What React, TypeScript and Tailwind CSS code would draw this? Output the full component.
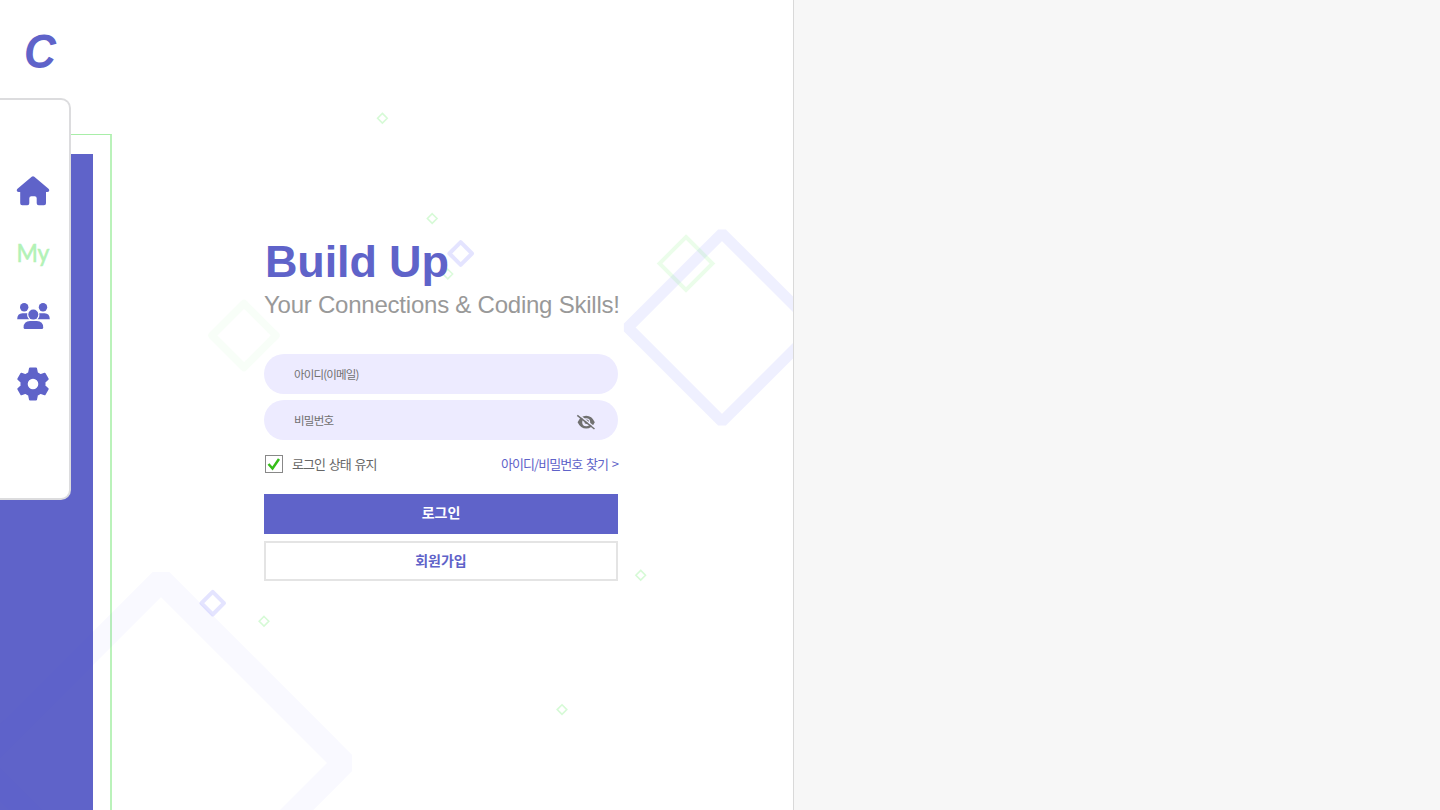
type Diamond = { cx: number; cy: number; r: number; w: number; color: string; join: "miter" | "round" | "bevel" };

const diamonds: Diamond[] = [
  { cx: 161, cy: 763, r: 182.7, w: 23.6, color: "rgba(95,75,255,0.035)", join: "bevel" },
  { cx: 722, cy: 327.5, r: 94.2, w: 11, color: "rgba(90,95,255,0.095)", join: "bevel" },
  { cx: 686, cy: 263.5, r: 26.5, w: 4, color: "rgba(90,240,80,0.12)", join: "miter" },
  { cx: 244, cy: 335.5, r: 32, w: 7.5, color: "rgba(90,240,90,0.045)", join: "round" },
  { cx: 460.7, cy: 253.5, r: 11.3, w: 4, color: "rgba(90,90,255,0.16)", join: "round" },
  { cx: 212.7, cy: 603.2, r: 11.3, w: 4, color: "rgba(90,90,255,0.16)", join: "round" },
  { cx: 382.4, cy: 118.2, r: 4.8, w: 1.6, color: "rgba(90,235,90,0.25)", join: "miter" },
  { cx: 432.2, cy: 218.5, r: 4.8, w: 1.6, color: "rgba(90,235,90,0.25)", join: "miter" },
  { cx: 447.8, cy: 274, r: 4.8, w: 1.6, color: "rgba(90,235,90,0.22)", join: "miter" },
  { cx: 640.7, cy: 575.2, r: 4.8, w: 1.6, color: "rgba(90,235,90,0.25)", join: "miter" },
  { cx: 264, cy: 621.3, r: 4.8, w: 1.6, color: "rgba(90,235,90,0.25)", join: "miter" },
  { cx: 562, cy: 709.6, r: 4.8, w: 1.6, color: "rgba(90,235,90,0.25)", join: "miter" },
];

function Backdrop() {
  return (
    <svg className="pointer-events-none absolute inset-0" width="793" height="810" viewBox="0 0 793 810" fill="none">
      {diamonds.map((d, i) => (
        <path
          key={i}
          d={`M${d.cx} ${d.cy - d.r}L${d.cx + d.r} ${d.cy}L${d.cx} ${d.cy + d.r}L${d.cx - d.r} ${d.cy}Z`}
          stroke={d.color}
          strokeWidth={d.w}
          strokeLinejoin={d.join}
        />
      ))}
    </svg>
  );
}

function HomeIcon() {
  return (
    <svg width="34" height="30" viewBox="0 0 34 30" fill="currentColor">
      <path d="M15.7 .8Q17-.2 18.3.8L32.5 12.8Q33.6 14 33 15.2Q32.5 16 31.3 16H30V27.2Q30 29.2 28 29.2H22.7Q20.7 29.2 20.7 27.2V22.2Q20.7 20.2 18.7 20.2H15.3Q13.3 20.2 13.3 22.2V27.2Q13.3 29.2 11.3 29.2H6.2Q4.2 29.2 4.2 27.2V16H2.7Q1.5 16 1 15.2Q.4 14 1.5 12.8Z" />
    </svg>
  );
}

function PeopleIcon() {
  return (
    <svg width="33" height="26" viewBox="0 0 33 26" fill="currentColor">
      <circle cx="7.2" cy="4.3" r="4.2" />
      <circle cx="26" cy="4.3" r="4.2" />
      <path d="M.2 16.2Q.2 10.2 5.5 10.2H10.3Q9.5 13.8 12.3 16.2Z" />
      <path d="M32.8 16.2Q32.8 10.2 27.5 10.2H22.2Q23.1 13.8 20.5 16.2Z" />
      <circle cx="16.3" cy="11.6" r="5" />
      <path d="M6.6 24.5Q6.6 18 13 18H19.8Q26.2 18 26.2 24.5Q26.2 26 24.8 26H8Q6.6 26 6.6 24.5Z" />
    </svg>
  );
}

function GearIcon() {
  return (
    <svg width="32" height="34" viewBox="0 0 32 34" fill="none">
      <path
        fill="currentColor"
        stroke="currentColor"
        strokeWidth="2"
        strokeLinejoin="round"
        fillRule="evenodd"
        d="M13 1.500H19L20 6.200L23.500 8.200L27.700 6.700L30.700 12L27.500 15V19L30.700 22L27.700 27.300L23.500 25.800L20 27.800L19 32.500H13L12 27.800L8.500 25.800L4.300 27.300L1.300 22L4.500 19V15L1.300 12L4.300 6.700L8.500 8.200L12 6.200ZM16 10.700A6.300 6.300 0 1 0 16 23.300A6.300 6.300 0 1 0 16 10.700Z"
      />
    </svg>
  );
}

function EyeOffIcon() {
  return (
    <svg className="mt-[3px]" width="20" height="18" viewBox="0 0 20 18" fill="none">
      <path
        fill="#707070"
        fillRule="evenodd"
        d="M1.600 9.200Q4.600 2.800 10.200 2.800T18.800 9.200Q15.800 15.600 10.200 15.600T1.600 9.200ZM10.200 5.200A4 4 0 1 0 10.200 13.200A4 4 0 1 0 10.200 5.200Z"
      />
      <circle cx="10.700" cy="8.800" r="2.300" fill="#707070" />
      <path d="M2.700 1.600L19.600 15" stroke="#edebff" strokeWidth="1.400" />
      <path d="M1.300 2.300L18.500 16" stroke="#707070" strokeWidth="1.500" />
    </svg>
  );
}

function Sidebar() {
  return (
    <aside className="flex w-[71px] shrink-0 flex-col">
      <div className="h-[98px] pt-[22px] pl-[24px] font-['Liberation_Sans',sans-serif] text-[48px] leading-[60px] font-bold text-[#5f63c9] italic">
        <span className="inline-block origin-left scale-x-92">C</span>
      </div>
      <nav className="flex h-[402px] flex-col items-center rounded-r-[10px] border-2 border-l-0 border-[#dcdcde] bg-white pt-[76px] pr-[3px] text-[#5f63c9]">
        <a className="flex h-[30px] items-center"><HomeIcon /></a>
        <a className="mt-[28px] h-[36px] scale-x-92 font-['Lato',sans-serif] text-[25px] leading-[36px] text-[#b2f2b6] [-webkit-text-stroke:0.6px_#b2f2b6]">My</a>
        <a className="mt-[33px]"><PeopleIcon /></a>
        <a className="mt-[38px]"><GearIcon /></a>
      </nav>
    </aside>
  );
}

function LoginForm() {
  return (
    <form className="flex w-[354px] flex-col font-['Noto_Sans_CJK_KR',sans-serif]" onSubmit={(e) => e.preventDefault()}>
      <h1 className="h-[54px] pl-px font-['Liberation_Sans',sans-serif] text-[45px] leading-[55px] font-bold tracking-[-0.15px] whitespace-nowrap text-[#5f63c9]">Build Up</h1>
      <p className="mt-px h-[32px] font-['Liberation_Sans',sans-serif] text-[24px] leading-[32px] tracking-[-0.23px] whitespace-nowrap text-[#999]">Your Connections &amp; Coding Skills!</p>
      <div className="mt-[33px] flex h-[40px] items-center rounded-full bg-[#edebff] pt-[2px] pl-[30px] text-[11.5px] tracking-[-0.85px] text-[#707070]">아이디(이메일)</div>
      <div className="mt-[6px] flex h-[40px] items-center justify-between rounded-full bg-[#edebff] pr-[22px] pl-[30px] text-[11.5px] tracking-[-0.75px] text-[#707070]">
        <span className="pt-[2px]">비밀번호</span>
        <EyeOffIcon />
      </div>
      <div className="mt-[14px] flex h-[20px] items-center justify-between text-[13px] tracking-[-0.95px] whitespace-nowrap [word-spacing:1.8px]">
        <label className="flex items-center gap-[9px] pl-[1px] text-[#666]">
          <span className="flex size-[18px] items-center justify-center border border-[#888] bg-white">
            <svg width="14" height="14" viewBox="0 0 14 14" fill="none" stroke="#35bd18" strokeWidth="2.5"><path d="M1.5 7L5.5 11.5L12 2" /></svg>
          </span>
          <span>로그인 상태 유지</span>
        </label>
        <a className="text-[#5f63c9]">아이디/비밀번호 찾기 &gt;</a>
      </div>
      <button className="mt-[20px] h-[40px] bg-[#5f63c9] pb-[3px] text-[14px] font-bold text-white">로그인</button>
      <button className="mt-[7px] h-[40px] border-2 border-[#e4e4e4] bg-white pb-[2px] text-[14px] font-bold text-[#5f63c9]">회원가입</button>
    </form>
  );
}

export default function App() {
  return (
    <div className="flex h-[810px] w-[1440px] overflow-hidden bg-[#f7f7f7]">
      <main className="relative flex w-[794px] shrink-0 border-r border-[#d9d9d9] bg-white">
        <div className="absolute top-[134px] left-0 h-[677px] w-[112px] border-t border-r-2 border-t-[#a8eea8] border-r-[#baf2ba]" />
        <div className="absolute top-[154px] left-0 h-[656px] w-[93px] bg-[#5f63c9]" />
        <Backdrop />
        <div className="relative flex">
          <Sidebar />
          <section className="pt-[234px] pl-[193px]"><LoginForm /></section>
        </div>
      </main>
    </div>
  );
}
